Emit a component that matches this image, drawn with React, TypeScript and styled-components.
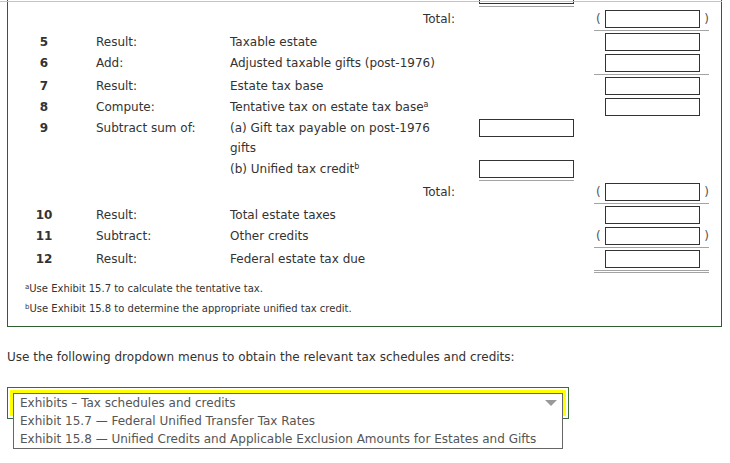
import React from "react";
import styled, { createGlobalStyle, css } from "styled-components";

const Global = createGlobalStyle`
  html, body { margin: 0; padding: 0; background: #fff; }
  body { font-family: "DejaVu Sans", Verdana, sans-serif; font-size: 12px; color: #333; }
`;

const Page = styled.div`
  position: relative;
  width: 730px;
  height: 463px;
  overflow: hidden;
`;

const TopRule = styled.div`
  position: absolute;
  top: 1px;
  left: 0;
  width: 722px;
  height: 1px;
  background: #c4c4c4;
`;

const Panel = styled.div`
  margin-left: 7px;
  width: 715px;
  box-sizing: border-box;
  border: 1px solid #2f5f2f;
  border-top: none;
  padding-bottom: 7px;
`;

const Row = styled.div<{ $clip?: boolean }>`
  display: grid;
  grid-template-columns: 72px 150px 249px 95px 20px 115px;
  align-items: start;
  ${(p) =>
    p.$clip &&
    css`
      height: 10px;
      overflow: hidden;
    `}
`;

const TextCell = styled.div`
  line-height: 20px;
  margin-top: -1px;
  padding-bottom: 2px;
`;

const NumCell = styled(TextCell)`
  text-align: center;
  font-weight: bold;
`;

const LabelCell = styled(TextCell)`
  padding-left: 16px;
`;

const DescCell = styled(TextCell)<{ $right?: boolean }>`
  padding-right: 24px;
  text-align: ${(p) => (p.$right ? "right" : "left")};
`;

type Rule = "none" | "single" | "double";

const ValueCell = styled.div<{ $rule: Rule; $shift?: number }>`
  margin-top: ${(p) => p.$shift ?? 0}px;
  ${(p) =>
    p.$rule === "none"
      ? css`
          padding-bottom: 3px;
        `
      : css`
          padding-bottom: 2px;
          margin-bottom: 2px;
          border-bottom: ${p.$rule === "double" ? "3px double" : "1px solid"} #a3a3a3;
        `}
`;

const Box = styled.div`
  width: 95px;
  height: 18px;
  box-sizing: border-box;
  border: 1px solid #333;
  background: #fff;
`;

const ParenRow = styled.div`
  display: flex;
  align-items: center;
  padding-left: 2px;
  height: 18px;
`;

const Paren = styled.span<{ $close?: boolean }>`
  width: 9px;
  line-height: 18px;
  color: #555;
  text-align: ${(p) => (p.$close ? "right" : "left")};
`;

const Sup = styled.sup`
  font-size: 8px;
  line-height: 0;
  vertical-align: 4px;
`;

const Notes = styled.div`
  padding: 4px 0 0 17px;
`;

const Note = styled.p`
  margin: 0;
  font-size: 10px;
  line-height: 20px;
  color: #333;
`;

const NoteSup = styled.sup`
  font-size: 7px;
  line-height: 0;
  vertical-align: 3px;
`;

const Intro = styled.p`
  margin: 21px 0 0 7px;
  line-height: 18px;
  color: #333;
`;

const DropFrame = styled.div`
  position: relative;
  margin: 21px 0 0 7px;
  width: 562px;
  box-sizing: border-box;
  border: 1px solid #3a6a3a;
  padding: 2px;
`;

const Highlight = styled.div`
  background: #ffff00;
  padding: 3px;
`;

const SelectBox = styled.div`
  position: relative;
  height: 20px;
  box-sizing: border-box;
  border: 1px solid #666;
  background: #fff;
  display: flex;
  align-items: center;
  justify-content: space-between;
  padding: 0 5px 0 6px;
  color: #555;
  line-height: 18px;
`;

const OptionList = styled.div`
  position: absolute;
  top: 100%;
  left: -1px;
  right: -1px;
  border: 1px solid #666;
  border-top: none;
  background: #fff;
`;

const Option = styled.div`
  height: 18px;
  line-height: 18px;
  padding-left: 6px;
  color: #555;
  white-space: nowrap;
`;

const Arrow = () => (
  <svg width="12" height="6" viewBox="0 0 12 6">
    <polygon points="0,0 12,0 6,6" fill="#999" />
  </svg>
);

type Value = { kind: "box" | "paren"; rule: Rule } | null;

const RightValue: React.FC<{ v: Value }> = ({ v }) => {
  if (!v) return <div />;
  return (
    <ValueCell $rule={v.rule}>
      <ParenRow>
        <Paren>{v.kind === "paren" ? "(" : ""}</Paren>
        <Box />
        <Paren $close>{v.kind === "paren" ? ")" : ""}</Paren>
      </ParenRow>
    </ValueCell>
  );
};

type Line = {
  num?: string;
  label?: string;
  desc?: React.ReactNode;
  total?: boolean;
  mid?: Rule;
  right?: Value;
};

const lines: Line[] = [
  { total: true, right: { kind: "paren", rule: "single" } },
  { num: "5", label: "Result:", desc: "Taxable estate", right: { kind: "box", rule: "none" } },
  { num: "6", label: "Add:", desc: "Adjusted taxable gifts (post-1976)", right: { kind: "box", rule: "single" } },
  { num: "7", label: "Result:", desc: "Estate tax base", right: { kind: "box", rule: "none" } },
  {
    num: "8",
    label: "Compute:",
    desc: (
      <>
        Tentative tax on estate tax base<Sup>a</Sup>
      </>
    ),
    right: { kind: "box", rule: "none" },
  },
  { num: "9", label: "Subtract sum of:", desc: "(a) Gift tax payable on post-1976 gifts", mid: "none" },
  {
    desc: (
      <>
        (b) Unified tax credit<Sup>b</Sup>
      </>
    ),
    mid: "single",
  },
  { total: true, right: { kind: "paren", rule: "single" } },
  { num: "10", label: "Result:", desc: "Total estate taxes", right: { kind: "box", rule: "none" } },
  { num: "11", label: "Subtract:", desc: "Other credits", right: { kind: "paren", rule: "single" } },
  { num: "12", label: "Result:", desc: "Federal estate tax due", right: { kind: "box", rule: "double" } },
];

export default function App() {
  return (
    <Page>
      <Global />
      <Panel>
        <Row $clip>
          <div />
          <div />
          <div />
          <ValueCell $rule="single" $shift={-14}>
            <Box />
          </ValueCell>
        </Row>
        {lines.map((l, i) => (
          <Row key={i}>
            <NumCell>{l.num ?? ""}</NumCell>
            <LabelCell>{l.label ?? ""}</LabelCell>
            <DescCell $right={l.total}>{l.total ? "Total:" : l.desc}</DescCell>
            {l.mid ? (
              <ValueCell $rule={l.mid}>
                <Box />
              </ValueCell>
            ) : (
              <div />
            )}
            <div />
            <RightValue v={l.right ?? null} />
          </Row>
        ))}
        <Notes>
          <Note>
            <NoteSup>a</NoteSup>Use Exhibit 15.7 to calculate the tentative tax.
          </Note>
          <Note>
            <NoteSup>b</NoteSup>Use Exhibit 15.8 to determine the appropriate unified tax credit.
          </Note>
        </Notes>
      </Panel>
      <Intro>Use the following dropdown menus to obtain the relevant tax schedules and credits:</Intro>
      <DropFrame>
        <Highlight>
          <SelectBox>
            <span>Exhibits – Tax schedules and credits</span>
            <Arrow />
            <OptionList>
              <Option>Exhibit 15.7 — Federal Unified Transfer Tax Rates</Option>
              <Option>Exhibit 15.8 — Unified Credits and Applicable Exclusion Amounts for Estates and Gifts</Option>
            </OptionList>
          </SelectBox>
        </Highlight>
      </DropFrame>
      <TopRule />
    </Page>
  );
}
